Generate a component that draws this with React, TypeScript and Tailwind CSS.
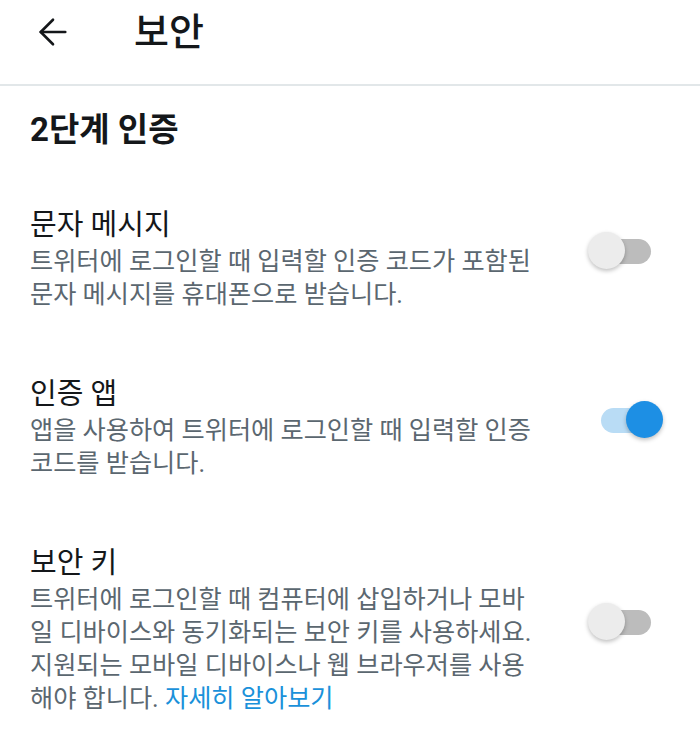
import React, { useState } from "react";
import { ArrowLeft } from "lucide-react";

type Item = {
  id: string;
  title: string;
  lines: string[];
  link?: string;
  on: boolean;
};

const ITEMS: Item[] = [
  {
    id: "sms",
    title: "문자 메시지",
    lines: ["트위터에 로그인할 때 입력할 인증 코드가 포함된", "문자 메시지를 휴대폰으로 받습니다."],
    on: false,
  },
  {
    id: "app",
    title: "인증 앱",
    lines: ["앱을 사용하여 트위터에 로그인할 때 입력할 인증", "코드를 받습니다."],
    on: true,
  },
  {
    id: "key",
    title: "보안 키",
    lines: [
      "트위터에 로그인할 때 컴퓨터에 삽입하거나 모바",
      "일 디바이스와 동기화되는 보안 키를 사용하세요.",
      "지원되는 모바일 디바이스나 웹 브라우저를 사용",
      "해야 합니다.",
    ],
    link: "자세히 알아보기",
    on: false,
  },
];

function Toggle({ on, onClick }: { on: boolean; onClick: () => void }) {
  return (
    <button onClick={onClick} className="relative w-[76px] h-[38px] shrink-0">
      <span
        className={`absolute left-[13px] top-[7px] w-[50px] h-[25px] rounded-full ${
          on ? "bg-[#b9dcf5]" : "bg-[#bcbcbc]"
        }`}
      />
      <span
        className={`absolute top-0 w-[37px] h-[37px] rounded-full shadow-[0_2px_4px_rgba(0,0,0,0.25)] ${
          on ? "left-[38px] bg-[#1d8fe4]" : "left-0 bg-[#ececec]"
        }`}
      />
    </button>
  );
}

export default function App() {
  const [state, setState] = useState<Record<string, boolean>>(
    Object.fromEntries(ITEMS.map((i) => [i.id, i.on]))
  );

  return (
    <div
      className="w-[700px] h-[730px] bg-white overflow-hidden"
      style={{ fontFamily: 'Roboto, "Noto Sans CJK KR", sans-serif' }}
    >
      {/* Header */}
      <div className="h-[86px] border-b-2 border-[#e2e7e9]">
        <div className="h-[64px] flex items-center">
          <button className="ml-[32px] text-[#14171a]">
            <ArrowLeft size={42} strokeWidth={1.5} />
          </button>
          <h1 className="ml-[60px] text-[38px] leading-[44px] font-medium text-[#14171a]">보안</h1>
        </div>
      </div>

      {/* Section */}
      <div className="px-[30px]">
        <h2 className="mt-[24px] text-[33px] leading-[40px] font-bold text-[#14171a]">2단계 인증</h2>

        <div className="mt-[58px] flex flex-col gap-[66px]">
          {ITEMS.map((item) => (
            <div key={item.id} className="flex items-center justify-between">
              <div>
                <div className="text-[29px] leading-[34px] text-[#14171a]">{item.title}</div>
                <p className="mt-[3px] text-[25.2px] leading-[33px] text-[#5b6770]">
                  {item.lines.map((line, i) => (
                    <React.Fragment key={i}>
                      {line}
                      {i < item.lines.length - 1 && <br />}
                    </React.Fragment>
                  ))}
                  {item.link && (
                    <>
                      {" "}
                      <a className="text-[#1a91da]">{item.link}</a>
                    </>
                  )}
                </p>
              </div>
              <div className="mr-[6px] pb-[10px]">
                <Toggle
                  on={state[item.id]}
                  onClick={() => setState((s) => ({ ...s, [item.id]: !s[item.id] }))}
                />
              </div>
            </div>
          ))}
        </div>
      </div>
    </div>
  );
}
